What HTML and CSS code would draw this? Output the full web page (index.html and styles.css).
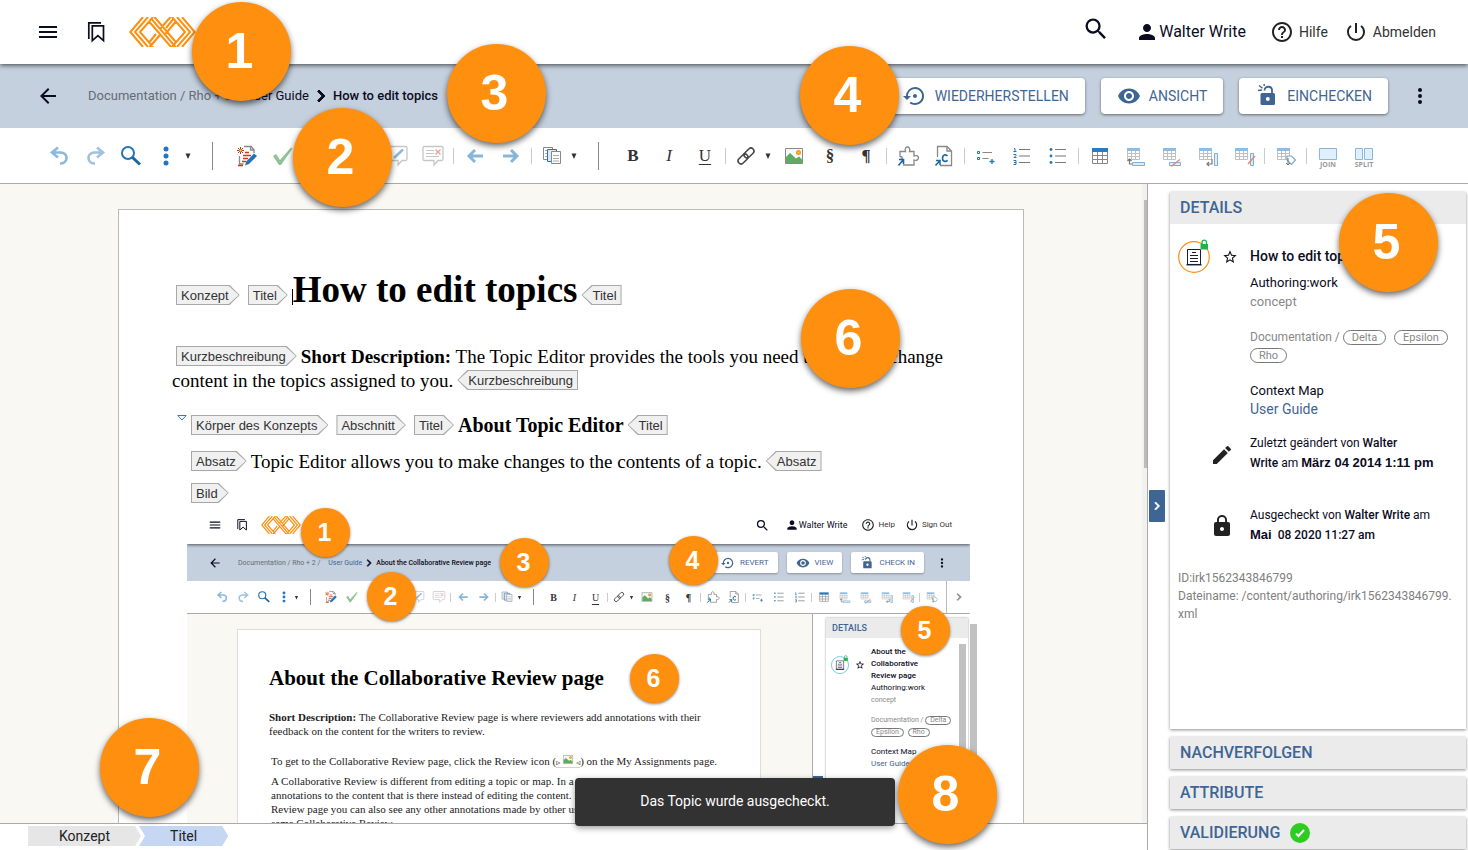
FILE: index.html
```html
<!DOCTYPE html>
<html lang="de">
<head>
<meta charset="utf-8">
<title>How to edit topics</title>
<link rel="stylesheet" href="styles.css">
</head>
<body>
<svg class="defs" aria-hidden="true">
  <symbol id="i-menu" viewBox="0 0 24 24"><path d="M3 6h18v2H3zm0 5h18v2H3zm0 5h18v2H3z"/></symbol>
  <symbol id="i-marks" viewBox="0 0 24 24"><path fill="none" stroke="currentColor" stroke-width="1.700" d="M4.800 19V2.800H17M8.300 5.800H19.500v14.800l-5.600-5-5.600 5z"/></symbol>
  <symbol id="i-logo" viewBox="0 0 67 30"><path fill="none" stroke="#ff8f0e" stroke-width="2" d="M14 0 1.300 15 14 30M19 0 6 15l13 15M24 0 11 15l13 15M53 0l12.700 15L53 30M48 0l13 15-13 15M43 0l13 15-13 15M19.700 4 42 30M22 1.300 46.500 30M25.500 0 47.600 26M47.300 4l-3.500 4M47.300 4 36 17.500M44.900 1.300 37 11M41.500 0 31 12M31 18 20.500 30M30 19l-8 9.700M27 17l-7.300 9" /></symbol>
  <symbol id="i-search" viewBox="0 0 24 24"><path d="M15.500 14h-.79l-.28-.27A6.470 6.470 0 0 0 16 9.500 6.500 6.500 0 1 0 9.500 16c1.610 0 3.090-.59 4.230-1.570l.27.28v.79l5 4.990L20.490 19l-4.990-5zm-6 0C7.010 14 5 11.990 5 9.500S7.010 5 9.500 5 14 7.010 14 9.500 11.990 14 9.500 14z"/></symbol>
  <symbol id="i-person" viewBox="0 0 24 24"><path d="M12 12c2.210 0 4-1.790 4-4s-1.790-4-4-4-4 1.790-4 4 1.790 4 4 4zm0 2c-2.670 0-8 1.340-8 4v2h16v-2c0-2.660-5.330-4-8-4z"/></symbol>
  <symbol id="i-help" viewBox="0 0 24 24"><path d="M11 18h2v-2h-2v2zm1-16C6.480 2 2 6.480 2 12s4.480 10 10 10 10-4.480 10-10S17.520 2 12 2zm0 18c-4.410 0-8-3.590-8-8s3.590-8 8-8 8 3.590 8 8-3.590 8-8 8zm0-14c-2.210 0-4 1.790-4 4h2c0-1.100.9-2 2-2s2 .9 2 2c0 2-3 1.750-3 5h2c0-2.250 3-2.500 3-5 0-2.210-1.790-4-4-4z"/></symbol>
  <symbol id="i-power" viewBox="0 0 24 24"><path d="M13 3h-2v10h2V3zm4.830 2.170-1.420 1.420A6.920 6.920 0 0 1 19 12c0 3.870-3.130 7-7 7A6.995 6.995 0 0 1 7.580 6.580L6.170 5.170A8.932 8.932 0 0 0 3 12a9 9 0 0 0 18 0c0-2.740-1.230-5.180-3.170-6.830z"/></symbol>
  <symbol id="i-back" viewBox="0 0 24 24"><path d="M20 11H7.830l5.590-5.590L12 4l-8 8 8 8 1.410-1.410L7.830 13H20v-2z"/></symbol>
  <symbol id="i-chev" viewBox="0 0 24 24"><path d="M10 6 8.590 7.410 13.170 12l-4.580 4.590L10 18l6-6z" stroke="currentColor"/></symbol>
  <symbol id="i-restore" viewBox="0 0 24 24"><path d="M14 12c0-1.100-.9-2-2-2s-2 .9-2 2 .9 2 2 2 2-.9 2-2zm-2-9a9 9 0 0 0-9 9H0l4 4 4-4H5c0-3.870 3.130-7 7-7s7 3.130 7 7-3.130 7-7 7c-1.510 0-2.910-.49-4.060-1.300l-1.420 1.440A9 9 0 1 0 12 3z"/></symbol>
  <symbol id="i-eye" viewBox="0 0 24 24"><path d="M12 4.500C7 4.500 2.730 7.610 1 12c1.730 4.390 6 7.500 11 7.500s9.270-3.110 11-7.500c-1.730-4.390-6-7.500-11-7.500zM12 17c-2.760 0-5-2.240-5-5s2.240-5 5-5 5 2.240 5 5-2.240 5-5 5zm0-8c-1.660 0-3 1.340-3 3s1.340 3 3 3 3-1.340 3-3-1.340-3-3-3z"/></symbol>
  <symbol id="i-unlock" viewBox="0 0 24 24"><path fill-rule="evenodd" d="M7 9h11.500a1.500 1.500 0 0 1 1.500 1.500v9a1.500 1.500 0 0 1-1.500 1.500H7a1.500 1.500 0 0 1-1.500-1.500v-9A1.500 1.500 0 0 1 7 9zm5.800 4a2 2 0 1 0 0 4 2 2 0 0 0 0-4z"/><path fill="none" stroke="currentColor" stroke-width="1.800" d="M9.500 6.500c0-5 7.500-5 7.500 0V9"/><path fill="none" stroke="currentColor" stroke-width="1.400" d="M3 6.500 7 6M4 1.500l3.500 2.700M9-.5l.3 2.500"/></symbol>
  <symbol id="i-lock" viewBox="0 0 24 24"><path d="M18 8h-1V6c0-2.760-2.240-5-5-5S7 3.240 7 6v2H6c-1.100 0-2 .9-2 2v10c0 1.100.9 2 2 2h12c1.100 0 2-.9 2-2V10c0-1.100-.9-2-2-2zm-6 9c-1.100 0-2-.9-2-2s.9-2 2-2 2 .9 2 2-.9 2-2 2zm3.100-9H8.900V6a3.100 3.100 0 0 1 6.200 0v2z"/></symbol>
  <symbol id="i-dots" viewBox="0 0 24 24"><circle cx="12" cy="6" r="2"/><circle cx="12" cy="12" r="2"/><circle cx="12" cy="18" r="2"/></symbol>
  <symbol id="i-caret" viewBox="0 0 8 8"><path d="M1.500 1.500h5L4 7z"/></symbol>
  <symbol id="i-undo" viewBox="0 0 24 24"><path fill="none" stroke="#8cb8dc" stroke-width="2.600" d="M11 3.500 5 8.500l6 5M5.500 8.500H14c8 1 7 11-1 11"/></symbol>
  <symbol id="i-redo" viewBox="0 0 24 24"><path fill="none" stroke="#a0c2dc" stroke-width="2.600" d="m14 3.500 6 5-6 5M19.500 8.500H11c-8 1-7 11 1 11"/></symbol>
  <symbol id="i-find" viewBox="0 0 24 24"><circle cx="9" cy="9" r="6" fill="none" stroke="#2474b8" stroke-width="2"/><path stroke="#1a669f" stroke-width="3" d="m13.500 13.500 7.500 7"/></symbol>
  <symbol id="i-more" viewBox="0 0 24 24"><g fill="#2474c8"><circle cx="12" cy="5" r="2.500"/><circle cx="12" cy="12" r="2.500"/><circle cx="12" cy="19" r="2.500"/></g></symbol>
  <symbol id="i-docedit" viewBox="0 0 24 24"><path fill="none" stroke="#888" stroke-width="1.300" d="M9 2.500h7l3 3V9M15.500 2.500V6H19M4.500 12v8h4"/><path stroke="#c8371e" stroke-width="1.300" d="M10 8.500h4M8 11.500h8M8 14.500h5M7 17.500h4M3 21.500h5"/><path stroke="#c8371e" d="M5.500 3v7M2 6.500h7M3 4l5 5M8 4 3 9"/><circle cx="5.500" cy="6.500" r="1.300" fill="#ffc62e"/><path d="m10 21.500 1.200-4L19 9.500l3 2.500-8 8z" fill="#2474b8"/></symbol>
  <symbol id="i-check" viewBox="0 0 24 24"><path fill="#8fc394" d="m2 12 3-2 4 6L20 3.500l1.500 1L10 21H8z"/></symbol>
  <symbol id="i-cross" viewBox="0 0 24 24"><path stroke="#dd9a90" stroke-width="2.500" d="m5 5 14 14M19 5 5 19"/></symbol>
  <symbol id="i-note" viewBox="0 0 24 24"><path fill="none" stroke="#c6c6c6" stroke-width="1.300" d="M3.500 2.500h17q1.500 0 1.500 1.500v11q0 1.500-1.500 1.500H17L13 21v-4.500H3.500Q2 16.500 2 15V4q0-1.500 1.500-1.500z"/><path stroke="#8cb8dc" stroke-width="2.500" d="m9 14 9-8.500"/></symbol>
  <symbol id="i-notex" viewBox="0 0 24 24"><path fill="none" stroke="#c6c6c6" stroke-width="1.300" d="M3.500 2.500h17q1.500 0 1.500 1.500v11q0 1.500-1.500 1.500H17L13 21v-4.500H3.500Q2 16.500 2 15V4q0-1.500 1.500-1.500z"/><path stroke="#c6c6c6" d="M5 6.500h8M5 9.500h8M5 12.500h13"/><path stroke="#e8a097" stroke-width="1.300" d="m14.500 5.500 5 5M19.500 5.500l-5 5"/></symbol>
  <symbol id="i-left" viewBox="0 0 24 24"><path fill="none" stroke="#86b6da" stroke-width="3" d="M20 12H6M12 6l-6 6 6 6"/></symbol>
  <symbol id="i-right" viewBox="0 0 24 24"><path fill="none" stroke="#86b6da" stroke-width="3" d="M4 12h14M12 6l6 6-6 6"/></symbol>
  <symbol id="i-copy" viewBox="0 0 24 24"><g fill="#fff" stroke="#888"><path d="M3.500 3.500h9v12h-9z"/><path stroke="#2474b8" fill="#d6e8fa" d="M7.500 5.500h9v12h-9z"/><path d="M11.500 7.500h9v12h-9z"/><path stroke="#aaa" d="M5 6.500h2M5 9.500h2M5 12.500h2M13 11.500h6M13 14.500h6M13 17h6"/></g></symbol>
  <symbol id="i-link" viewBox="0 0 24 24"><g fill="none" stroke="#444" stroke-width="1.500" transform="rotate(-45 12 12)"><rect x="2" y="9" width="11.500" height="6" rx="3"/><rect x="10.500" y="9" width="11.500" height="6" rx="3"/></g></symbol>
  <symbol id="i-image" viewBox="0 0 24 24"><path fill="#f4f9ff" stroke="#888" d="M3.500 4.500h17v15h-17z"/><path fill="#5fab60" d="M4 19v-6l4-4 6 5.500 3-2 3 3V19z"/><circle cx="16.500" cy="8.500" r="2.500" fill="#ff8f0e"/><circle cx="16.500" cy="8.500" r="1" fill="#ffd54a"/></symbol>
  <symbol id="i-puzzle" viewBox="0 0 24 24"><path fill="none" stroke="#888" stroke-width="1.300" d="M4 13V7.500h5.500c-2-6 6-6 4 0H18V12c6-2.500 6 6 0 4v5H7M4 12.500c3 0 3 3 0 3"/><path stroke="#1a669f" stroke-width="1.600" fill="none" d="M3 15.500h4.500V20M7.500 15.500l-5 6"/></symbol>
  <symbol id="i-cdoc" viewBox="0 0 24 24"><path fill="none" stroke="#888" stroke-width="1.300" d="M5.500 13V2.500h9.500l4.500 4.500v14.500H8M15 2.500V7h4.500"/><path fill="none" stroke="#1a669f" stroke-width="1.700" d="M15.500 12c-2-2.300-5-1-5 2.200s3 4.300 5 2"/><path stroke="#1a669f" stroke-width="1.500" fill="none" d="M4 16.500h4V21M8 16.500 3.500 21.500"/></symbol>
  <symbol id="i-addlist" viewBox="0 0 24 24"><path fill="none" stroke="#2474b8" d="M3.500 7.500h2v2h-2zM3.500 13.500h2v2h-2z"/><path stroke="#888" stroke-width="1.200" d="M8.500 8.500H18M8.500 14.500h6"/><path stroke="#2474b8" stroke-width="1.300" d="M15.500 17.500h5M18 15v5"/></symbol>
  <symbol id="i-ol" viewBox="0 0 24 24"><path stroke="#777" stroke-width="1.200" d="M9 5.500h11M9 12h11M9 18.500h11"/><path fill="none" stroke="#2474b8" d="M4 4.500h1v3M3.500 7.500h3M3.500 10.500h2.500v1l-2 2H6.500M3.500 16.500h2.500v4h-2.500M4 18.500h2"/></symbol>
  <symbol id="i-ul" viewBox="0 0 24 24"><path stroke="#777" stroke-width="1.200" d="M9 5.500h11M9 12h11M9 18.500h11"/><g fill="#2474b8"><circle cx="5" cy="5.500" r="1.400"/><circle cx="5" cy="12" r="1.400"/><circle cx="5" cy="18.500" r="1.400"/></g></symbol>
  <symbol id="i-table" viewBox="0 0 24 24"><path fill="#2a7bc6" d="M4 4h16v4H4z"/><path fill="none" stroke="#888" d="M4.500 8v11.500h15V8M4 11.500h16M4 15.500h16M9.500 8v12M14.500 8v12"/></symbol>
  <symbol id="i-grid" viewBox="0 0 24 24"><path fill="#8dbce4" d="M3 4h13v3H3z"/><path fill="none" stroke="#c0c0c0" d="M3.500 7v8.500h12V7M3 9.500h13M3 12.500h13M7.500 7v8M11.500 7v8"/></symbol>
  <symbol id="i-rowadd" viewBox="0 0 24 24"><use href="#i-grid"/><path fill="#dcecfa" stroke="#7fb0d8" d="M8.500 18.500h12v3h-12z"/><path fill="none" stroke="#777" stroke-width="1.200" d="M8 20H5.500v-5M3.500 17l2-2 2 2"/></symbol>
  <symbol id="i-rowdel" viewBox="0 0 24 24"><use href="#i-grid"/><path fill="#dcecfa" stroke="#7fb0d8" d="M9.500 18.500h11v3h-11z"/><path stroke="#e8897c" stroke-width="1.500" d="m11 22.500 9-7"/></symbol>
  <symbol id="i-coladd" viewBox="0 0 24 24"><use href="#i-grid"/><path fill="#dcecfa" stroke="#7fb0d8" d="M18.500 9.500h3v12h-3z"/><path fill="none" stroke="#777" stroke-width="1.200" d="M16 15v5h-5M13 18l-2 2 2 2"/></symbol>
  <symbol id="i-coldel" viewBox="0 0 24 24"><use href="#i-grid"/><path fill="#dcecfa" stroke="#7fb0d8" d="M18.500 9.500h3v12h-3z"/><path stroke="#e8897c" stroke-width="1.500" d="m16 20 7-8"/></symbol>
  <symbol id="i-tagcell" viewBox="0 0 24 24"><use href="#i-grid"/><path fill="#fff" stroke="#7fa6c4" stroke-width="1.200" d="M13 12h4.500l4 4-4 4.500L13 16z"/><path fill="none" stroke="#777" d="M14 14v7l-2-2M14 21l2-2"/></symbol>
  <symbol id="i-join" viewBox="0 0 24 14"><path fill="#e0effc" stroke="#8ab8dc" d="M3.500 1.500h17v11h-17z"/></symbol>
  <symbol id="i-split" viewBox="0 0 24 14"><path fill="#e0effc" stroke="#8ab8dc" d="M3.500 1.500h7v11h-7zM12.500 1.500h8v11h-8z"/></symbol>
  <symbol id="i-star" viewBox="0 0 24 24"><path d="m22 9.240-7.190-.62L12 2 9.190 8.630 2 9.240l5.460 4.730L5.820 21 12 17.270 18.180 21l-1.630-7.030L22 9.240zM12 15.400l-3.760 2.270 1-4.280-3.320-2.880 4.380-.38L12 6.100l1.710 4.040 4.380.38-3.320 2.880 1 4.280L12 15.400z"/></symbol>
  <symbol id="i-pencil" viewBox="0 0 24 24"><path d="M3 17.250V21h3.750L17.810 9.940l-3.750-3.750L3 17.250zM20.710 7.040a1 1 0 0 0 0-1.410l-2.340-2.340a1 1 0 0 0-1.410 0l-1.830 1.830 3.750 3.750 1.830-1.830z"/></symbol>
  <symbol id="i-topic" viewBox="0 0 32 34"><circle cx="16" cy="18" r="15.300" fill="#fff" stroke="currentColor" stroke-width="1.200"/><path fill="none" stroke="#1c1c34" d="M9.500 10.500h13v15h-13z"/><path stroke="#1c1c34" stroke-width="1.500" d="M8.500 25.700h15"/><path stroke="#1c1c34" d="M14 13.500h4M12 16.500h8M12 19.500h8M12 22.500h8"/><path fill="#22b14c" d="M22.500 5h7.500v5.500h-7.500z"/><path fill="none" stroke="#22b14c" stroke-width="1.300" d="M24 5V3a2.300 2.300 0 0 1 4.500 0v2"/></symbol>
  <symbol id="i-valid" viewBox="0 0 20 20"><circle cx="10" cy="10" r="10" fill="#2ecc23"/><path fill="none" stroke="#fff" stroke-width="2" d="m6 10.500 2.500 2.500L14 7"/></symbol>
</svg>

<div class="app">
  <header class="top">
    <button class="plain" aria-label="Menü"><svg class="ic24"><use href="#i-menu"/></svg></button>
    <button class="plain" aria-label="Lesezeichen"><svg class="ic24"><use href="#i-marks"/></svg></button>
    <a class="logo" href="#" aria-label="Startseite"><svg><use href="#i-logo"/></svg></a>
    <button class="plain finder" aria-label="Suche"><svg><use href="#i-search"/></svg></button>
    <a class="user" href="#"><svg><use href="#i-person"/></svg>Walter Write</a>
    <a class="toplink" href="#"><svg><use href="#i-help"/></svg>Hilfe</a>
    <a class="toplink" href="#"><svg><use href="#i-power"/></svg>Abmelden</a>
  </header>

  <div class="bar">
    <button class="plain" aria-label="Zurück"><svg class="ic24"><use href="#i-back"/></svg></button>
    <nav class="path"><span class="dim">Documentation / Rho + 2 /</span> <a href="#">User Guide</a><svg><use href="#i-chev"/></svg><b>How to edit topics</b></nav>
    <div class="actions">
      <button class="action"><svg><use href="#i-restore"/></svg>WIEDERHERSTELLEN</button>
      <button class="action"><svg><use href="#i-eye"/></svg>ANSICHT</button>
      <button class="action"><svg><use href="#i-unlock"/></svg>EINCHECKEN</button>
      <button class="plain" aria-label="Mehr"><svg class="ic24"><use href="#i-dots"/></svg></button>
    </div>
  </div>

  <div class="tools" role="toolbar">
    <button aria-label="Rückgängig"><svg><use href="#i-undo"/></svg></button>
    <button aria-label="Wiederholen"><svg><use href="#i-redo"/></svg></button>
    <button aria-label="Suchen"><svg><use href="#i-find"/></svg></button>
    <button class="menu" aria-label="Weitere"><svg><use href="#i-more"/></svg></button><button class="caret" aria-label="Liste"><svg><use href="#i-caret"/></svg></button>
    <i class="rule"></i>
    <button aria-label="Änderungen"><svg><use href="#i-docedit"/></svg></button>
    <button aria-label="Annehmen"><svg><use href="#i-check"/></svg></button>
    <button aria-label="Ablehnen"><svg><use href="#i-cross"/></svg></button>
    <i class="sep"></i>
    <button aria-label="Notiz"><svg><use href="#i-note"/></svg></button>
    <button aria-label="Notiz bearbeiten"><svg><use href="#i-note"/></svg></button>
    <button aria-label="Notiz löschen"><svg><use href="#i-notex"/></svg></button>
    <i class="sep"></i>
    <button aria-label="Vorherige"><svg><use href="#i-left"/></svg></button>
    <button aria-label="Nächste"><svg><use href="#i-right"/></svg></button>
    <i class="sep"></i>
    <button class="menu" aria-label="Kopieren"><svg><use href="#i-copy"/></svg></button><button class="caret" aria-label="Liste"><svg><use href="#i-caret"/></svg></button>
    <i class="rule"></i>
    <button><b>B</b></button>
    <button><em>I</em></button>
    <button><u>U</u></button>
    <i class="sep"></i>
    <button class="menu" aria-label="Link"><svg><use href="#i-link"/></svg></button><button class="caret" aria-label="Liste"><svg><use href="#i-caret"/></svg></button>
    <button aria-label="Bild"><svg><use href="#i-image"/></svg></button>
    <button><b>§</b></button>
    <button><b>¶</b></button>
    <i class="sep"></i>
    <button aria-label="Komponente"><svg><use href="#i-puzzle"/></svg></button>
    <button aria-label="Conref"><svg><use href="#i-cdoc"/></svg></button>
    <i class="sep"></i>
    <button aria-label="Eintrag"><svg><use href="#i-addlist"/></svg></button>
    <button aria-label="Nummerierung"><svg><use href="#i-ol"/></svg></button>
    <button aria-label="Aufzählung"><svg><use href="#i-ul"/></svg></button>
    <i class="sep"></i>
    <button aria-label="Tabelle"><svg><use href="#i-table"/></svg></button>
    <button aria-label="Zeile einfügen"><svg><use href="#i-rowadd"/></svg></button>
    <button aria-label="Zeile löschen"><svg><use href="#i-rowdel"/></svg></button>
    <button aria-label="Spalte einfügen"><svg><use href="#i-coladd"/></svg></button>
    <button aria-label="Spalte löschen"><svg><use href="#i-coldel"/></svg></button>
    <i class="sep"></i>
    <button aria-label="Zelle"><svg><use href="#i-tagcell"/></svg></button>
    <i class="sep"></i>
    <button class="named"><svg><use href="#i-join"/></svg><small>JOIN</small></button>
    <button class="named"><svg><use href="#i-split"/></svg><small>SPLIT</small></button>
  </div>

  <main class="work">
    <section class="editor">
      <div class="canvas">
        <article class="sheet">
          <h1><span class="tag">Konzept</span><span class="tag">Titel</span><span class="cursor"></span>How to edit topics<span class="tag end">Titel</span></h1>
          <p class="short"><span class="tag">Kurzbeschreibung</span><b>Short Description:</b> The Topic Editor provides the tools you need to make or change content in the topics assigned to you.<span class="tag end">Kurzbeschreibung</span></p>
          <div class="block">
            <svg class="fold" viewBox="0 0 10 6"><path fill="#fff" stroke="#2a7bc6" d="M.8.5h8.400L5 5z"/></svg>
            <h2><span class="tag">Körper des Konzepts</span><span class="tag">Abschnitt</span><span class="tag">Titel</span>About Topic Editor<span class="tag end">Titel</span></h2>
            <p><span class="tag">Absatz</span>Topic Editor allows you to make changes to the contents of a topic.<span class="tag end">Absatz</span></p>
            <div class="pic"><span class="tag">Bild</span></div>
          </div>

          <figure class="mini">
            <div class="top">
              <button class="plain" aria-label="Menu"><svg class="ic24"><use href="#i-menu"/></svg></button>
              <button class="plain" aria-label="Bookmarks"><svg class="ic24"><use href="#i-marks"/></svg></button>
              <a class="logo" href="#" aria-label="Home"><svg><use href="#i-logo"/></svg></a>
              <button class="plain finder" aria-label="Search"><svg><use href="#i-search"/></svg></button>
              <a class="user" href="#"><svg><use href="#i-person"/></svg>Walter Write</a>
              <a class="toplink" href="#"><svg><use href="#i-help"/></svg>Help</a>
              <a class="toplink" href="#"><svg><use href="#i-power"/></svg>Sign Out</a>
            </div>
            <div class="bar">
              <button class="plain" aria-label="Back"><svg class="ic24"><use href="#i-back"/></svg></button>
              <nav class="path"><span class="dim">Documentation / Rho + 2 /</span> <a href="#">User Guide</a><svg><use href="#i-chev"/></svg><b>About the Collaborative Review page</b></nav>
              <div class="actions">
                <button class="action"><svg><use href="#i-restore"/></svg>REVERT</button>
                <button class="action"><svg><use href="#i-eye"/></svg>VIEW</button>
                <button class="action"><svg><use href="#i-unlock"/></svg>CHECK IN</button>
                <button class="plain" aria-label="More"><svg class="ic24"><use href="#i-dots"/></svg></button>
              </div>
            </div>
            <div class="tools">
              <button aria-label="Undo"><svg><use href="#i-undo"/></svg></button>
              <button aria-label="Redo"><svg><use href="#i-redo"/></svg></button>
              <button aria-label="Find"><svg><use href="#i-find"/></svg></button>
              <button class="menu" aria-label="More"><svg><use href="#i-more"/></svg></button><button class="caret" aria-label="List"><svg><use href="#i-caret"/></svg></button>
              <i class="rule"></i>
              <button aria-label="Changes"><svg><use href="#i-docedit"/></svg></button>
              <button aria-label="Accept"><svg><use href="#i-check"/></svg></button>
              <button aria-label="Reject"><svg><use href="#i-cross"/></svg></button>
              <i class="sep"></i>
              <button aria-label="Note"><svg><use href="#i-note"/></svg></button>
              <button aria-label="Edit note"><svg><use href="#i-note"/></svg></button>
              <button aria-label="Delete note"><svg><use href="#i-notex"/></svg></button>
              <i class="sep"></i>
              <button aria-label="Previous"><svg><use href="#i-left"/></svg></button>
              <button aria-label="Next"><svg><use href="#i-right"/></svg></button>
              <i class="sep"></i>
              <button class="menu" aria-label="Copy"><svg><use href="#i-copy"/></svg></button><button class="caret" aria-label="List"><svg><use href="#i-caret"/></svg></button>
              <i class="rule"></i>
              <button><b>B</b></button>
              <button><em>I</em></button>
              <button><u>U</u></button>
              <i class="sep"></i>
              <button class="menu" aria-label="Link"><svg><use href="#i-link"/></svg></button><button class="caret" aria-label="List"><svg><use href="#i-caret"/></svg></button>
              <button aria-label="Image"><svg><use href="#i-image"/></svg></button>
              <button><b>§</b></button>
              <button><b>¶</b></button>
              <i class="sep"></i>
              <button aria-label="Component"><svg><use href="#i-puzzle"/></svg></button>
              <button aria-label="Conref"><svg><use href="#i-cdoc"/></svg></button>
              <i class="sep"></i>
              <button aria-label="Entry"><svg><use href="#i-addlist"/></svg></button>
              <button aria-label="Bullets"><svg><use href="#i-ul"/></svg></button>
              <button aria-label="Numbers"><svg><use href="#i-ol"/></svg></button>
              <i class="sep"></i>
              <button aria-label="Table"><svg><use href="#i-table"/></svg></button>
              <button aria-label="Add row"><svg><use href="#i-rowadd"/></svg></button>
              <button aria-label="Delete row"><svg><use href="#i-rowdel"/></svg></button>
              <button aria-label="Add column"><svg><use href="#i-coladd"/></svg></button>
              <button aria-label="Delete column"><svg><use href="#i-coldel"/></svg></button>
              <i class="sep"></i>
              <button aria-label="Cell"><svg><use href="#i-tagcell"/></svg></button>
              <button class="next" aria-label="Scroll"><svg><use href="#i-chev"/></svg></button>
            </div>
            <div class="mini-work">
              <div class="mini-canvas">
                <div class="mini-sheet">
                  <h3>About the Collaborative Review page</h3>
                  <p><b>Short Description:</b> The Collaborative Review page is where reviewers add annotations with their<br>feedback on the content for the writers to review.</p>
                  <p class="gap">To get to the Collaborative Review page, click the Review icon (<span class="inline-pic">▹<svg><use href="#i-image"/></svg>◃</span>) on the My Assignments page.</p>
                  <p class="long">A Collaborative Review is different from editing a topic or map. In a Collaborative Review, you add<br>annotations to the content that is there instead of editing the content. In the Collaborative<br>Review page you can also see any other annotations made by other users of the<br>same Collaborative Review.</p>
                </div>
              </div>
              <div class="mini-side">
                <button class="mini-fly" aria-label="Collapse"></button>
                <div class="mini-card">
                  <div class="mini-head">DETAILS</div>
                  <div class="mini-body">
                    <svg class="topic"><use href="#i-topic"/></svg>
                    <svg class="star"><use href="#i-star"/></svg>
                    <div class="mini-text">
                      <b>About the<br>Collaborative<br>Review page</b>
                      <span>Authoring:work</span>
                      <span class="grey">concept</span>
                      <div class="mini-tags">Documentation / <span class="pill">Delta</span><br><span class="pill">Epsilon</span> <span class="pill">Rho</span></div>
                      <span>Context Map</span>
                      <a href="#">User Guide</a>
                    </div>
                    <i class="mini-scroll"></i>
                  </div>
                </div>
                <i class="mini-scroll"></i>
              </div>
            </div>
            <span class="badge small m1">1</span>
            <span class="badge small m2">2</span>
            <span class="badge small m3">3</span>
            <span class="badge small m4">4</span>
            <span class="badge small m5">5</span>
            <span class="badge small m6">6</span>
          </figure>
        </article>
        <div class="scroll"><i></i></div>
      </div>
      <nav class="crumbs"><a class="crumb" href="#">Konzept</a><a class="crumb now" href="#">Titel</a></nav>
    </section>

    <aside class="side">
      <button class="fly" aria-label="Einklappen"><svg><use href="#i-chev"/></svg></button>
      <section class="card details">
        <h2 class="cardhead">DETAILS</h2>
        <div class="info">
          <svg class="topic"><use href="#i-topic"/></svg>
          <svg class="star"><use href="#i-star"/></svg>
          <div class="text">
            <b class="name">How to edit topics</b>
            <span>Authoring:work</span>
            <span class="grey">concept</span>
            <div class="pills grey">Documentation / <span class="pill">Delta</span> <span class="pill">Epsilon</span> <span class="pill">Rho</span></div>
            <span>Context Map</span>
            <a href="#">User Guide</a>
          </div>
          <svg class="mark"><use href="#i-pencil"/></svg>
          <p class="event">Zuletzt geändert von <b>Walter<br>Write</b> am <strong>März 04 2014 1:11 pm</strong></p>
          <svg class="mark low"><use href="#i-lock"/></svg>
          <p class="event out">Ausgecheckt von <b>Walter Write</b> am<br><strong>Mai</strong>&nbsp; <b>08 2020 11:27 am</b></p>
        </div>
        <p class="ident">ID:irk1562343846799<br>Dateiname: /content/authoring/irk1562343846799.<wbr>xml</p>
      </section>
      <section class="card"><h2 class="cardhead">NACHVERFOLGEN</h2></section>
      <section class="card"><h2 class="cardhead">ATTRIBUTE</h2></section>
      <section class="card"><h2 class="cardhead">VALIDIERUNG <svg><use href="#i-valid"/></svg></h2></section>
    </aside>
  </main>
</div>

<div class="toast" role="status">Das Topic wurde ausgecheckt.</div>
<span class="badge b1">1</span>
<span class="badge b2">2</span>
<span class="badge b3">3</span>
<span class="badge b4">4</span>
<span class="badge b5">5</span>
<span class="badge b6">6</span>
<span class="badge b7">7</span>
<span class="badge b8">8</span>
</body>
</html>
```
FILE: styles.css
```css
* { box-sizing: border-box; }
body { margin: 0; font: 14px/20px Roboto, "Liberation Sans", sans-serif; color: #0b0b22; background: #fff; overflow: hidden; }
button { border: 0; padding: 0; background: none; font: inherit; color: inherit; cursor: pointer; }
a { color: inherit; text-decoration: none; }
h1, h2, h3, p, figure { margin: 0; }
svg { fill: currentColor; flex: none; }
.defs { position: absolute; width: 0; height: 0; }
.app { display: flex; flex-direction: column; height: 100vh; }

/* top bar */
.top { position: relative; z-index: 2; display: flex; align-items: center; height: 64px; padding: 0 32px 0 36px; background: #fff; box-shadow: 0 1px 5px rgba(0, 0, 0, .7); flex: none; }
.plain { display: flex; align-items: center; justify-content: center; }
.ic24 { width: 24px; height: 24px; }
.top .plain { margin-right: 24px; }
.logo { display: flex; margin-left: -3px; margin-right: auto; }
.logo svg { width: 67px; height: 30px; }
.top .finder { margin: 0 25px 6px 0; }
.finder svg { width: 28px; height: 28px; }
.user { display: flex; align-items: center; font-size: 16px; margin-right: 24px; }
.user svg { width: 24px; height: 24px; }
.toplink { display: flex; align-items: center; gap: 5px; margin-right: 16px; color: #333; }
.toplink svg { width: 24px; height: 24px; color: #222; }
.toplink:last-child { margin-right: 0; }

/* path bar */
.bar { display: flex; align-items: center; height: 64px; padding: 0 36px; background: #c5d0de; flex: none; }
.path { display: flex; align-items: center; margin-left: 28px; font-size: 13px; white-space: nowrap; }
.path .dim { color: #666b75; margin-right: 5px; }
.path svg { width: 24px; height: 24px; }
.path b { font-weight: 500; }
.actions { display: flex; align-items: center; gap: 16px; margin-left: auto; }
.action { display: flex; align-items: center; gap: 8px; height: 36px; padding: 0 16px; border-radius: 4px; background: #fff; color: #3f6594; font-size: 14px; box-shadow: 0 1px 3px rgba(0, 0, 0, .5); }
.action svg { width: 24px; height: 24px; }
.actions .plain { margin-left: 4px; }

/* tool bar */
.tools { --slot: 36px; --icon: 24px; --glyph: 17px; display: flex; align-items: center; height: 56px; padding-left: 41px; border-bottom: 1px solid #aaa; background: #fff; flex: none; }
.tools button { display: flex; align-items: center; justify-content: center; width: var(--slot); height: var(--slot); flex: none; color: #333; font: var(--glyph) "Liberation Serif", serif; }
.tools svg { width: var(--icon); height: var(--icon); }
.tools .menu { width: 34px; }
.tools .caret { width: 8px; margin: 0 4px 0 1px; }
.tools .caret svg { width: 8px; height: 8px; }
.tools u { text-underline-offset: 3px; text-decoration-thickness: 1px; }
.sep { width: 1px; height: 16px; margin: 0 3px 0 2px; background: #ccc; flex: none; }
.rule { width: 1px; height: 28px; margin: 0 16px; background: #888; flex: none; }
.tools .named { flex-direction: column; padding-top: 4px; }
.named small { font: 700 7px/8px "Open Sans", sans-serif; color: #999; }
.tools .named svg { height: 14px; }

/* work area */
.work { flex: 1; display: grid; grid-template-columns: 1fr 320px; min-height: 0; }
.editor { display: flex; flex-direction: column; min-width: 0; min-height: 0; border-right: 1px solid #aaa; }
.canvas { position: relative; flex: 1; min-height: 0; overflow: hidden; padding: 25px 123px 0 118px; background: #f9f8f3; }
.sheet { min-height: 900px; padding: 0 53px; border: 1px solid #bbb; background: #fff; font: 19px/24px "Liberation Serif", serif; color: #000; }
.scroll { position: absolute; top: 0; right: 0; bottom: 0; width: 5px; padding: 16px 0 0 2px; background: #f1f1f1; }
.scroll i { display: block; height: 43%; background: #bbb; }
.tag { position: relative; isolation: isolate; display: inline-block; height: 20px; padding: 0 11px 0 5px; margin: 0 4px; background: #a8a8a8; color: #333; font: 13px/21px "Liberation Sans", sans-serif; vertical-align: 2px; clip-path: polygon(0 0, calc(100% - 10px) 0, 100% 50%, calc(100% - 10px) 100%, 0 100%); }
.tag::before { content: ""; position: absolute; z-index: -1; inset: 1px; background: #f0f0f0; clip-path: polygon(0 0, calc(100% - 10px) 0, 100% 50%, calc(100% - 10px) 100%, 0 100%); }
.tag.end { padding: 0 5px 0 11px; }
.tag.end, .tag.end::before { clip-path: polygon(10px 0, 100% 0, 100% 100%, 10px 100%, 0 50%); }
.sheet h1 { padding-top: 56px; font: bold 37px/48px "Liberation Serif", serif; }
.sheet h1 .tag { vertical-align: 2px; }
.cursor { display: inline-block; width: 1px; height: 16px; background: #000; vertical-align: -3px; }
.short { margin-top: 31px; }
.block { position: relative; padding: 0 15px; margin-top: 20px; }
.fold { position: absolute; left: 5px; top: 2px; width: 10px; height: 6px; }
.block h2 { font: bold 20px/24px "Liberation Serif", serif; }
.block p { margin-top: 13px; }
.pic { margin-top: 8px; }

/* screenshot figure inside the topic */
.mini { position: relative; margin: 0 0 0 15px; font: 8px/12px Roboto, sans-serif; color: #0b0b22; }
.mini .top { height: 38px; padding: 0 18px 0 21px; box-shadow: 0 1px 3px rgba(0, 0, 0, .6); clip-path: inset(0 0 -6px 0); }
.mini .ic24 { width: 14px; height: 14px; }
.mini .top .plain { margin-right: 13px; }
.mini .logo { margin-left: -1px; margin-right: auto; }
.mini .logo svg { width: 40px; height: 18px; }
.mini .top .finder { margin: 0 15px 0 0; }
.mini .finder svg { width: 15px; height: 15px; }
.mini .user { margin-right: 14px; font-size: 9px; }
.mini .user svg { width: 14px; height: 14px; }
.mini .toplink { gap: 3px; margin-right: 10px; font-size: 8px; }
.mini .toplink svg { width: 14px; height: 14px; }
.mini .toplink:last-child { margin-right: 0; }
.mini .bar { height: 37px; padding: 0 21px; }
.mini .path { margin-left: 16px; font-size: 7px; }
.mini .path .dim { margin-right: 8px; }
.mini .path a { color: #3f6594; }
.mini .path svg { width: 14px; height: 14px; }
.mini .actions { gap: 9px; }
.mini .action { height: 21px; padding: 0 9px; gap: 5px; font-size: 8px; border-radius: 2px; box-shadow: 0 1px 2px rgba(0, 0, 0, .3); }
.mini .action svg { width: 14px; height: 14px; }
.mini .actions .plain { margin-left: 2px; }
.mini .tools { --slot: 21px; --icon: 14px; --glyph: 10px; height: 33px; padding-left: 24px; }
.mini .tools .menu { width: 19px; }
.mini .tools .caret { width: 5px; margin: 0 2px 0 1px; }
.mini .tools .caret svg { width: 5px; height: 5px; }
.mini .sep { height: 9px; margin: 0 1px; }
.mini .rule { height: 16px; margin: 0 9px; }
.mini .tools .next { width: 24px; height: 33px; margin-left: auto; border-left: 1px solid #bbb; color: #888; }
.mini-work { display: grid; grid-template-columns: minmax(0, 1fr) 157px; background: #f9f8f3; }
.mini-canvas { min-width: 0; padding: 15px 51px 0 50px; border-right: 1px solid #aaa; }
.mini-sheet { height: 300px; padding: 32px 30px 0 31px; border: 1px solid #ddd; background: #fff; font: 11px/14px "Liberation Serif", serif; color: #222; white-space: nowrap; }
.mini-sheet h3 { font: bold 21px/32px "Liberation Serif", serif; color: #000; }
.mini-sheet p { margin: 16px 0 0; }
.mini-sheet p.gap { margin: 15px 0 0 2px; }
.mini-sheet p.long { margin: 5px 0 0 2px; }
.inline-pic { border-bottom: 1px solid #ffd54a; font: 8px/12px "DejaVu Sans", sans-serif; }
.inline-pic svg { width: 16px; height: 13px; vertical-align: -1px; }
.mini-side { position: relative; display: flex; padding: 4px 0 0 13px; background: #fff; }
.mini-fly { position: absolute; left: 0; top: 162px; width: 10px; height: 18px; background: #3f6594; }
.mini-card { flex: 1; display: flex; flex-direction: column; margin-right: 2px; box-shadow: 0 0 2px rgba(0, 0, 0, .4); }
.mini-head { height: 20px; padding: 0 6px; background: #ebebeb; color: #3f6594; font: 500 9px/20px Roboto, sans-serif; }
.mini-body { flex: 1; display: grid; grid-template-columns: 18px 10px 1fr 7px; column-gap: 6px; padding: 0 2px 0 5px; }
.mini .topic { width: 18px; height: 19px; margin-top: 17px; color: #3fb1e5; }
.mini .star { width: 10px; height: 10px; margin-top: 22px; }
.mini-text { display: flex; flex-direction: column; padding-top: 8px; font-size: 8px; line-height: 12px; white-space: nowrap; }
.mini-text b { font-weight: 500; }
.mini-text .grey, .mini-tags { color: #888; font-size: 7px; }
.mini-tags { margin: 8px 0; }
.mini-text a { color: #3f6594; }
.mini .pill { padding: 0 4px; margin-right: 2px; font-size: 7px; line-height: 7px; }
.mini-scroll { width: 7px; margin-top: 6px; background: #c1c1c1; flex: none; }

/* breadcrumb footer */
.crumbs { display: flex; height: 27px; padding: 2px 28px 4px; border-top: 1px solid #aaa; flex: none; color: #222; }
.crumb { height: 20px; padding: 0 31px; background: #e6e6e6; clip-path: polygon(0 0, calc(100% - 6px) 0, 100% 50%, calc(100% - 6px) 100%, 0 100%); }
.crumb.now { margin-left: -2px; background: #c5d7f2; clip-path: polygon(0 0, calc(100% - 6px) 0, 100% 50%, calc(100% - 6px) 100%, 0 100%, 6px 50%); }

/* side panel */
.side { position: relative; display: flex; flex-direction: column; gap: 8px; min-height: 0; padding: 8px 2px 1px 22px; background: #fff; }
.fly { position: absolute; left: 1px; top: 46%; width: 16px; height: 32px; background: #3f6594; color: #fff; border-radius: 1px; }
.fly svg { display: block; width: 16px; height: 16px; }
.card { flex: none; box-shadow: 0 1px 3px rgba(0, 0, 0, .45); }
.details { flex: 1; }
.cardhead { display: flex; align-items: center; gap: 10px; height: 32px; padding: 0 10px; background: #ebebeb; color: #3f6594; font: 500 16px/32px Roboto, sans-serif; }
.cardhead svg { width: 20px; height: 20px; }
.info { display: grid; grid-template-columns: 44px 28px 1fr; padding: 15px 8px 0; }
.topic { width: 32px; height: 34px; color: #ff8f0e; }
.star { width: 16px; height: 16px; margin-top: 10px; }
.text { display: flex; flex-direction: column; padding-top: 7px; font-size: 13px; line-height: 19px; }
.name { font-size: 14px; font-weight: 500; line-height: 20px; margin-bottom: 7px; }
.grey { color: #888; }
.pills { margin: 17px -10px 17px 0; font-size: 12px; line-height: 18px; }
.pill { display: inline-block; padding: 0 8px; margin-right: 5px; border: 1px solid #777; border-radius: 8px; font-size: 11px; line-height: 13px; color: #888; }
.text a { color: #3f6594; font-size: 14px; }
.mark { grid-column: 1 / 3; justify-self: end; width: 24px; height: 24px; margin: 24px 16px 0 0; color: #222; }
.mark.low { margin-top: 41px; }
.event { padding-top: 14px; font-size: 12px; line-height: 20px; white-space: nowrap; }
.event b { font-weight: 500; }
.event strong { font: bold 13px/16px "Liberation Sans", sans-serif; }
.event.out { padding-top: 32px; }
.ident { margin: 24px 8px 0; color: #808080; font: 12px/18px Roboto, sans-serif; }

/* overlays */
.toast { position: absolute; left: 50%; bottom: 24px; width: 320px; margin-left: -159px; padding: 11px 12px 13px; border-radius: 4px; background: #323232; color: #fff; font-size: 14px; line-height: 24px; text-align: center; box-shadow: 0 2px 6px rgba(0, 0, 0, .4); }
.badge { position: absolute; z-index: 5; width: 99px; height: 99px; padding-right: 4px; border-radius: 50%; background: #ff8f0e; color: #fff; font: bold 50px/99px "Liberation Sans", sans-serif; text-align: center; box-shadow: 0 3px 6px rgba(0, 0, 0, .6); }
.b1 { left: 192px; top: 2px; }
.b2 { left: 293px; top: 108px; }
.b3 { left: 447px; top: 44px; }
.b4 { left: 800px; top: 46px; }
.b5 { left: 1339px; top: 193px; }
.b6 { left: 801px; top: 289px; }
.b7 { left: 100px; top: 718px; }
.b8 { left: 898px; top: 745px; }
.small { width: 49px; height: 49px; padding-right: 2px; font-size: 25px; line-height: 48px; box-shadow: 0 1px 3px rgba(0, 0, 0, .5); }
.m1 { left: 114px; top: 2px; }
.m2 { left: 180px; top: 66px; }
.m3 { left: 313px; top: 32px; }
.m4 { left: 482px; top: 30px; }
.m5 { left: 714px; top: 100px; }
.m6 { left: 443px; top: 148px; }
```
